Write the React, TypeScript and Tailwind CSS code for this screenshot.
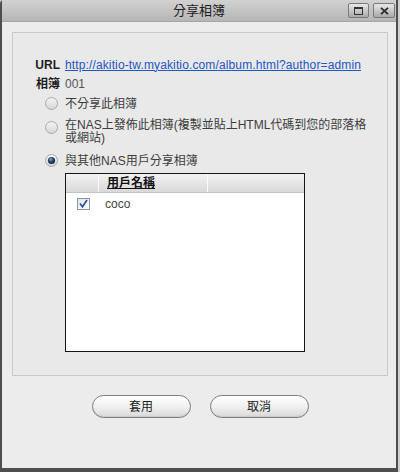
import React from "react";

const font = { fontFamily: '"Liberation Sans", Arial, "Noto Sans CJK TC", sans-serif' };

function Radio({ checked }: { checked?: boolean }) {
  return (
    <svg width="13" height="13" viewBox="0 0 13 13" className="shrink-0">
      <defs>
        <linearGradient id="rg" x1="0" y1="0" x2="0" y2="1">
          <stop offset="0" stopColor="#f6f6f6" />
          <stop offset="1" stopColor="#d4d4d4" />
        </linearGradient>
        <radialGradient id="dot" cx="0.4" cy="0.35" r="0.7">
          <stop offset="0" stopColor="#7fa8d0" />
          <stop offset="0.5" stopColor="#24486e" />
          <stop offset="1" stopColor="#0d1f33" />
        </radialGradient>
      </defs>
      <circle cx="6.5" cy="6.5" r="6" fill="url(#rg)" stroke="#a8a8a8" strokeWidth="1" />
      {checked && <circle cx="6.5" cy="6.5" r="3.6" fill="url(#dot)" />}
    </svg>
  );
}

function Checkbox() {
  return (
    <svg width="13" height="12" viewBox="0 0 13 12" className="shrink-0">
      <defs>
        <linearGradient id="cb" x1="0" y1="0" x2="1" y2="1">
          <stop offset="0" stopColor="#dfe4ea" />
          <stop offset="1" stopColor="#ffffff" />
        </linearGradient>
      </defs>
      <rect x="0.5" y="0.5" width="12" height="11" fill="url(#cb)" stroke="#8796a8" />
      <path d="M3 5.5 L5.5 8.8 L10 2" fill="none" stroke="#2e4fa0" strokeWidth="1.7" />
    </svg>
  );
}

export default function App() {
  return (
    <div className="w-[400px] h-[472px] bg-[#cfcfcf] overflow-hidden" style={font}>
      <div className="w-[398px] h-[472px] flex flex-col bg-[#ececec] border-l-2 border-r-2 border-b-[4px] border-[#4e4e4e] rounded-tl-[4px]">
        {/* Title bar */}
        <div className="h-[22px] shrink-0 relative bg-gradient-to-b from-[#d2d2d2] to-[#b6b6b6] border-b border-[#a6a6a6] flex items-center justify-center">
          <span className="text-[13px] text-[#1e1e1e] leading-none" style={font}>分享相簿</span>
          <div className="absolute right-[1px] top-[3px] flex gap-[4px]">
            <div className="w-[21px] h-[15px] rounded-[2px] border border-[#7a7a7a] bg-gradient-to-b from-[#e8e8e8] to-[#a9a9a9] flex items-center justify-center">
              <div className="w-[9px] h-[8px] border-[1.5px] border-t-[2px] border-[#333]" />
            </div>
            <div className="w-[22px] h-[15px] rounded-[2px] border border-[#7a7a7a] bg-gradient-to-b from-[#e8e8e8] to-[#a9a9a9] flex items-center justify-center">
              <svg width="9" height="8" viewBox="0 0 9 8">
                <path d="M1 0.8 L8 7.2 M8 0.8 L1 7.2" stroke="#2b2b2b" strokeWidth="1.8" />
              </svg>
            </div>
          </div>
        </div>

        {/* Panel */}
        <div className="ml-[10px] mt-[10px] w-[376px] h-[344px] shrink-0 bg-[#e9e9e9] border border-[#c9c9c9] flex flex-col pt-[22px]">
          <div className="h-[19px] flex items-center text-[12px]">
            <span className="w-[47px] text-right font-bold text-[#1e1e1e]">URL</span>
            <a className="ml-[5px] text-[#2456c8] underline underline-offset-1 whitespace-nowrap tracking-[0.13px]">
              http://akitio-tw.myakitio.com/album.html?author=admin
            </a>
          </div>
          <div className="h-[19px] flex items-center text-[12px]">
            <span className="w-[47px] text-right font-bold text-[#1e1e1e]">相簿</span>
            <span className="ml-[5px] text-[#555]">001</span>
          </div>
          <div className="mt-[1px] h-[19px] flex items-center text-[12px] text-[#3c3c3c]">
            <div className="ml-[32px] w-[20px]"><Radio /></div>
            <span>不分享此相簿</span>
          </div>
          <div className="mt-[6px] flex items-start text-[12px] text-[#3c3c3c]">
            <div className="ml-[32px] w-[20px] pt-[2px]"><Radio /></div>
            <span className="leading-[13px]">
              在NAS上發佈此相簿(複製並貼上HTML代碼到您的部落格
              <br />
              或網站)
            </span>
          </div>
          <div className="mt-[6px] h-[19px] flex items-center text-[12px] text-[#3c3c3c]">
            <div className="ml-[32px] w-[20px]"><Radio checked /></div>
            <span>與其他NAS用戶分享相簿</span>
          </div>

          {/* Table */}
          <div className="mt-[3px] ml-[52px] w-[240px] h-[179px] bg-white border border-[#151515] flex flex-col">
            <div className="h-[19px] flex bg-gradient-to-b from-[#f2f2f2] to-[#d9d9d9] border-b border-[#c4c4c4] text-[12px]">
              <div className="w-[33px] border-r border-[#fafafa]" />
              <div className="w-[109px] border-r border-[#fafafa] flex items-center pl-[8px]">
                <span className="font-bold underline text-[#111]">用戶名稱</span>
              </div>
              <div className="flex-1" />
            </div>
            <div className="h-[21px] flex items-center text-[12px] text-[#444]">
              <div className="w-[33px] flex justify-center pl-[1px]"><Checkbox /></div>
              <span className="pl-[6px]">coco</span>
            </div>
          </div>
        </div>

        {/* Buttons */}
        <div className="mt-[19px] flex justify-center gap-[19px] pl-[2px]">
          <button className="w-[99px] h-[23px] rounded-full border border-[#7d7d7d] bg-gradient-to-b from-[#ffffff] via-[#f1f1f1] to-[#d9d9d9] shadow-[inset_0_-1px_1px_rgba(0,0,0,0.08)] text-[12px] text-[#1a1a1a]" style={font}>
            套用
          </button>
          <button className="w-[99px] h-[23px] rounded-full border border-[#7d7d7d] bg-gradient-to-b from-[#ffffff] via-[#f1f1f1] to-[#d9d9d9] shadow-[inset_0_-1px_1px_rgba(0,0,0,0.08)] text-[12px] text-[#1a1a1a]" style={font}>
            取消
          </button>
        </div>
      </div>
    </div>
  );
}
